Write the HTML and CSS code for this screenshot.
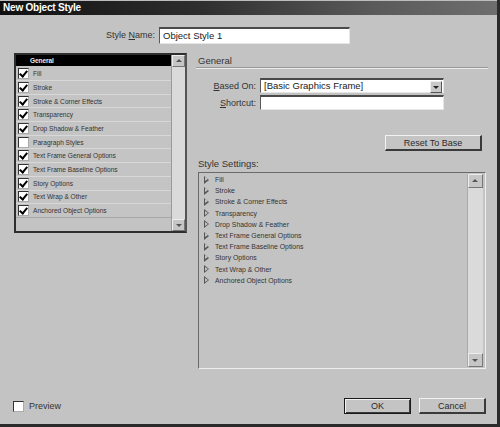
FILE: index.html
```html
<!DOCTYPE html>
<html>
<head>
<meta charset="utf-8">
<link rel="stylesheet" href="styles.css">
</head>
<body>
<div class="dialog">
  <div class="titlebar">New Object Style</div>
  <div class="content">
    <div class="name-row">
      <label class="lbl">Style <u>N</u>ame:</label>
      <div class="textbox name-box">Object Style 1</div>
    </div>
    <div class="main">
      <div class="catlist">
        <div class="cat-items">
          <div class="cat-head">General</div>
          <div class="cat"><span class="cb on"></span>Fill</div>
          <div class="cat"><span class="cb on"></span>Stroke</div>
          <div class="cat"><span class="cb on"></span>Stroke &amp; Corner Effects</div>
          <div class="cat"><span class="cb on"></span>Transparency</div>
          <div class="cat"><span class="cb on"></span>Drop Shadow &amp; Feather</div>
          <div class="cat"><span class="cb"></span>Paragraph Styles</div>
          <div class="cat"><span class="cb on"></span>Text Frame General Options</div>
          <div class="cat"><span class="cb on"></span>Text Frame Baseline Options</div>
          <div class="cat"><span class="cb on"></span>Story Options</div>
          <div class="cat"><span class="cb on"></span>Text Wrap &amp; Other</div>
          <div class="cat"><span class="cb on"></span>Anchored Object Options</div>
        </div>
        <div class="vscroll">
          <div class="sbtn up"></div>
          <div class="track"></div>
          <div class="sbtn down"></div>
        </div>
      </div>
      <div class="panel">
        <div class="section-title">General</div>
        <div class="form">
          <div class="frow">
            <label class="lbl flbl"><u>B</u>ased On:</label>
            <div class="textbox select">[Basic Graphics Frame]<span class="ddbtn"></span></div>
          </div>
          <div class="frow">
            <label class="lbl flbl"><u>S</u>hortcut:</label>
            <div class="textbox select"></div>
          </div>
        </div>
        <div class="reset-row"><div class="btn reset">Reset To Base</div></div>
        <div class="lbl ss-label">Style Settings:</div>
        <div class="settings">
          <div class="set-items">
            <div class="set"><span class="tri"></span>Fill</div>
            <div class="set"><span class="tri"></span>Stroke</div>
            <div class="set"><span class="tri"></span>Stroke &amp; Corner Effects</div>
            <div class="set"><span class="tri"></span>Transparency</div>
            <div class="set"><span class="tri"></span>Drop Shadow &amp; Feather</div>
            <div class="set"><span class="tri"></span>Text Frame General Options</div>
            <div class="set"><span class="tri"></span>Text Frame Baseline Options</div>
            <div class="set"><span class="tri"></span>Story Options</div>
            <div class="set"><span class="tri"></span>Text Wrap &amp; Other</div>
            <div class="set"><span class="tri"></span>Anchored Object Options</div>
          </div>
          <div class="vscroll vs2">
            <div class="sbtn up"></div>
            <div class="track"></div>
            <div class="sbtn down"></div>
          </div>
        </div>
      </div>
    </div>
    <div class="footer">
      <div class="preview"><span class="cb pv"></span>Preview</div>
      <div class="buttons">
        <div class="btn ok">OK</div>
        <div class="btn cancel">Cancel</div>
      </div>
    </div>
  </div>
</div>
</body>
</html>
```

FILE: styles.css
```css
html, body {
  margin: 0;
  padding: 0;
  background: #c3c3c3;
}
.dialog {
  width: 497px;
  height: 424px;
  border-right: 3px solid #2a2a2a;
  border-bottom: 3px solid #2a2a2a;
  background: #c3c3c3;
  display: flex;
  flex-direction: column;
  font-family: "Liberation Sans", Arial, sans-serif;
  color: #2a2a2a;
  position: relative;
}
.titlebar {
  height: 14px;
  border-top: 1px solid #bdbdbd;
  background: linear-gradient(to right, #101010 0%, #2e2e2e 40%, #5a5a5a 75%, #6e6e6e 100%);
  color: #fff;
  font-weight: bold;
  font-size: 10px;
  line-height: 14px;
  padding-left: 3px;
  letter-spacing: -0.2px;
}
.content {
  flex: 1;
  display: flex;
  flex-direction: column;
}
.lbl {
  font-size: 9px;
  color: #333;
}
.name-row {
  display: flex;
  align-items: center;
  margin-top: 12px;
  padding-left: 106px;
  gap: 4px;
  height: 16px;
}
.textbox {
  background: #fff;
  border-top: 2px solid #4a4a4a;
  border-left: 1px solid #5a5a5a;
  border-right: 1px solid #e6e6e6;
  border-bottom: 1px solid #e6e6e6;
  box-sizing: border-box;
  font-size: 9.5px;
  color: #1a1a1a;
  padding-left: 3px;
}
.name-box {
  width: 191px;
  height: 17px;
  line-height: 14px;
}
.main {
  display: flex;
  margin-top: 10px;
}
.catlist {
  margin-left: 14px;
  width: 173px;
  height: 180px;
  box-sizing: border-box;
  border: 2px solid #2e2e2e;
  border-right-color: #555;
  display: flex;
}
.cat-items {
  flex: 1;
  display: flex;
  flex-direction: column;
}
.cat-head {
  background: #000;
  color: #e8e8e8;
  height: 11px;
  line-height: 11px;
  font-size: 6.6px;
  padding-left: 14px;
  font-weight: bold;
  letter-spacing: -0.1px;
}
.cat {
  height: 12.7px;
  border-top: 1px solid #d8d8d8;
  box-sizing: content-box;
  display: flex;
  align-items: center;
  font-size: 6.6px;
  color: #333;
  background: #c4c4c4;
}
.cat:nth-child(2) { border-top: 0; height: 14px; }
.cat:last-child { border-bottom: 1px solid #a8a8a8; }
.cb {
  width: 9px;
  height: 9px;
  background: #fff;
  border-top: 1px solid #333;
  border-left: 1px solid #333;
  border-right: 1px solid #aaa;
  border-bottom: 1px solid #aaa;
  margin-left: 2px;
  margin-right: 4px;
  position: relative;
  flex: none;
}
.cb.on::after {
  content: "";
  position: absolute;
  left: 2px;
  top: 0px;
  width: 3px;
  height: 6px;
  border-right: 2px solid #000;
  border-bottom: 2px solid #000;
  transform: rotate(40deg);
}
.vscroll {
  width: 13px;
  display: flex;
  flex-direction: column;
  background: #d6d6d6;
  border-left: 1px solid #9a9a9a;
}
.sbtn {
  height: 12px;
  background: #c6c6c6;
  border-top: 1px solid #eee;
  border-left: 1px solid #eee;
  border-right: 1px solid #777;
  border-bottom: 1px solid #777;
  box-sizing: border-box;
  position: relative;
}
.sbtn::after {
  content: "";
  position: absolute;
  left: 3px;
  width: 0;
  height: 0;
  border-left: 3px solid transparent;
  border-right: 3px solid transparent;
}
.sbtn.up::after {
  top: 3px;
  border-bottom: 3px solid #555;
}
.sbtn.down::after {
  top: 4px;
  border-top: 3px solid #555;
}
.track {
  flex: 1;
  background: #dadada;
}
.panel {
  margin-left: 9px;
  width: 292px;
  display: flex;
  flex-direction: column;
}
.section-title {
  font-size: 9.5px;
  color: #333;
  padding-left: 2px;
  height: 14px;
  line-height: 13px;
  border-bottom: 1px solid #eaeaea;
  box-shadow: 0 -1px 0 #9a9a9a inset;
  margin-top: 1px;
}
.form {
  display: flex;
  flex-direction: column;
  gap: 2px;
  margin-top: 9px;
}
.frow {
  display: flex;
  align-items: center;
}
.flbl {
  width: 64px;
  text-align: right;
  padding-right: 4px;
  box-sizing: border-box;
}
.select {
  width: 184px;
  height: 15px;
  line-height: 12px;
  position: relative;
}
.ddbtn {
  position: absolute;
  right: 1px;
  top: 1px;
  width: 10px;
  height: 10px;
  background: #c8c8c8;
  border-top: 1px solid #eee;
  border-left: 1px solid #eee;
  border-right: 1px solid #555;
  border-bottom: 1px solid #555;
}
.ddbtn::after {
  content: "";
  position: absolute;
  left: 2px;
  top: 4px;
  border-left: 3px solid transparent;
  border-right: 3px solid transparent;
  border-top: 3px solid #222;
}
.reset-row {
  display: flex;
  justify-content: flex-end;
  margin-top: 25px;
  padding-right: 6px;
}
.btn {
  background: #c4c4c4;
  border-top: 1px solid #f2f2f2;
  border-left: 1px solid #f2f2f2;
  border-right: 2px solid #3a3a3a;
  border-bottom: 2px solid #3a3a3a;
  box-sizing: border-box;
  font-size: 9px;
  color: #2a2a2a;
  display: flex;
  align-items: center;
  justify-content: center;
  height: 16px;
}
.reset {
  width: 97px;
}
.ss-label {
  margin-top: 7px;
  padding-left: 2px;
  font-size: 9.5px;
  height: 12px;
  line-height: 12px;
}
.settings {
  margin-left: 2px;
  margin-top: 2px;
  width: 288px;
  height: 197px;
  box-sizing: border-box;
  border-top: 1px solid #6a6a6a;
  border-left: 1px solid #6a6a6a;
  border-right: 1px solid #eee;
  border-bottom: 1px solid #eee;
  display: flex;
}
.set-items {
  flex: 1;
  padding-top: 1px;
}
.set {
  height: 11.2px;
  display: flex;
  align-items: center;
  font-size: 6.9px;
  color: #333;
}
.tri {
  width: 0;
  height: 0;
  margin-left: 5px;
  margin-right: 6px;
  border-top: 4px solid transparent;
  border-bottom: 4px solid transparent;
  border-left: 5px solid #555;
  position: relative;
}
.tri::after {
  content: "";
  position: absolute;
  left: -4px;
  top: -2.5px;
  border-top: 2.5px solid transparent;
  border-bottom: 2.5px solid transparent;
  border-left: 3px solid #c4c4c4;
}
.vs2 {
  width: 15px;
  margin: 1px 2px 1px 0;
  border-left: 1px solid #aaa;
}
.vs2 .sbtn { height: 14px; }
.vs2 .sbtn.up::after { top: 4px; left: 3px; }
.vs2 .sbtn.down::after { top: 5px; left: 3px; }
.footer {
  margin-top: auto;
  margin-bottom: 10px;
  display: flex;
  justify-content: space-between;
  align-items: center;
  padding-left: 13px;
  padding-right: 11px;
}
.preview {
  display: flex;
  align-items: center;
  font-size: 9px;
  color: #333;
}
.pv {
  width: 9px;
  height: 9px;
  margin-left: 0;
  margin-right: 5px;
}
.buttons {
  display: flex;
  gap: 8px;
}
.ok, .cancel {
  width: 67px;
  height: 16px;
}
.ok {
  border: 1px solid #1a1a1a;
  box-shadow: inset 1px 1px 0 #f2f2f2, inset -1px -1px 0 #3a3a3a;
}
```
